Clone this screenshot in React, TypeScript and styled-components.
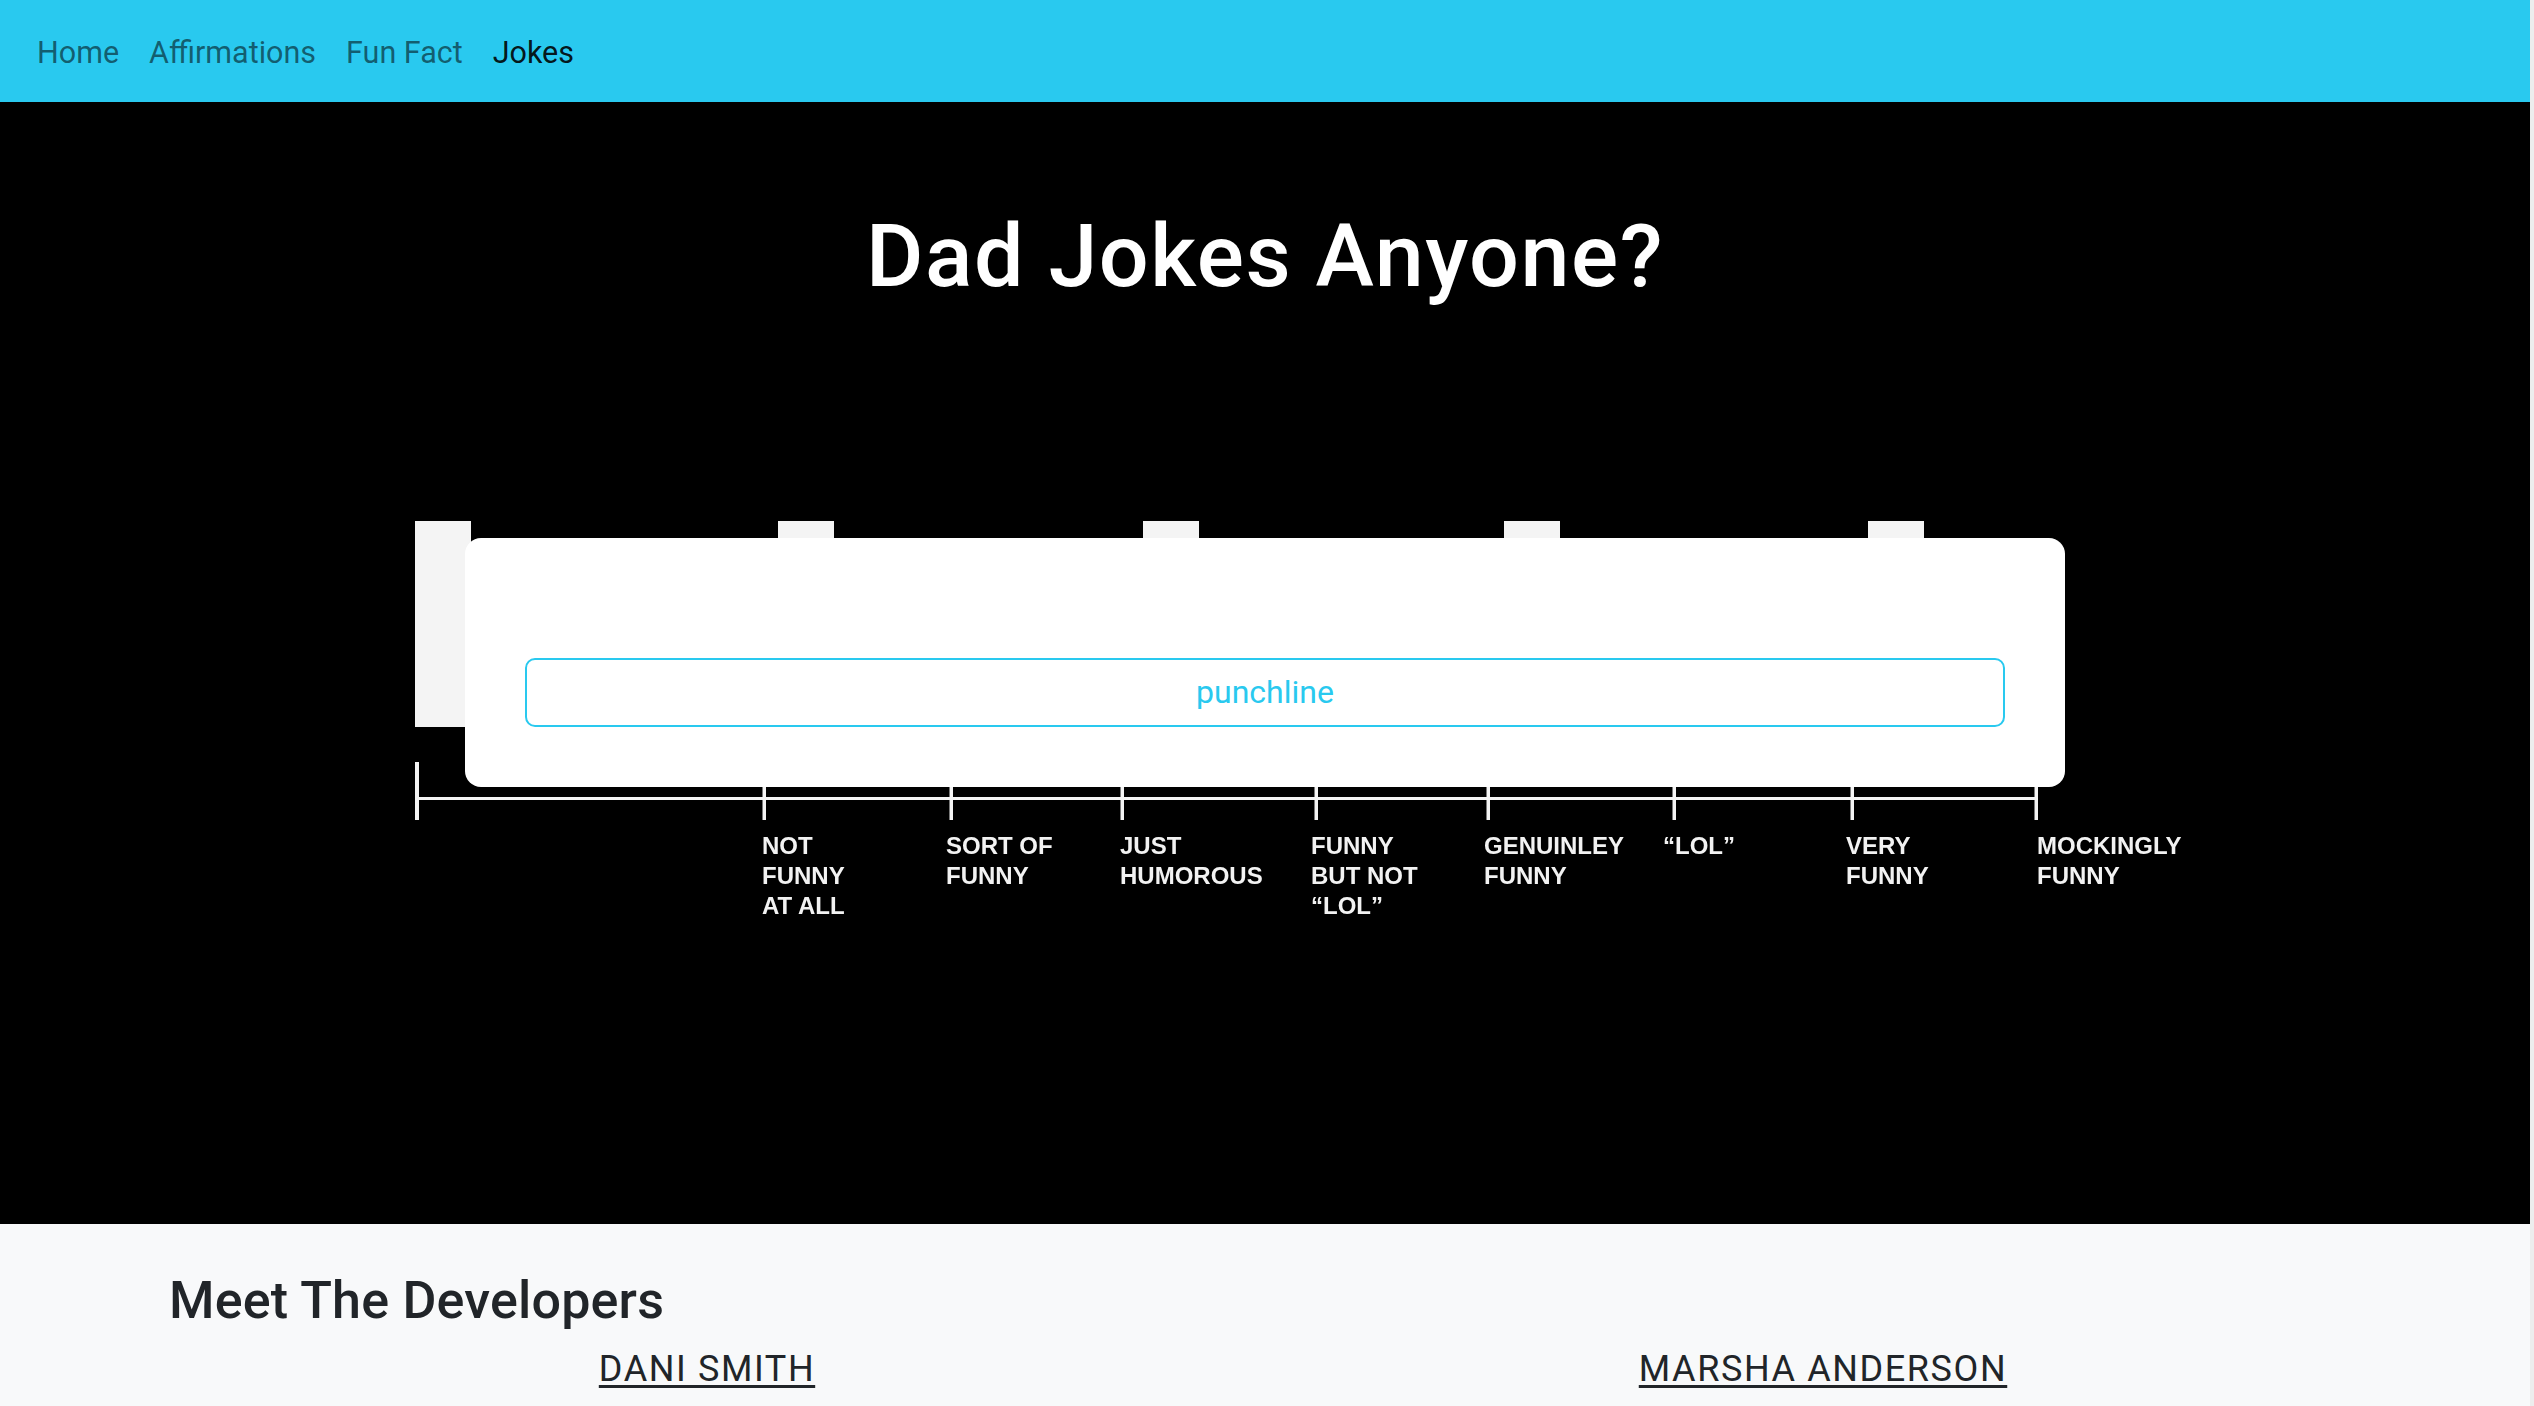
import React from "react";
import styled, { createGlobalStyle } from "styled-components";

const GlobalStyle = createGlobalStyle`
  html {
    background: #ededed;
    overflow: hidden;
  }
  body {
    margin: 0 4px 0 0;
    background: #f8f9fa;
    font-family: Roboto, "Liberation Sans", Arial, sans-serif;
    color: #212529;
  }
  * {
    box-sizing: border-box;
  }
`;

const CYAN = "#29c9ef";

const NavBar = styled.nav`
  display: flex;
  align-items: center;
  height: 102px;
  padding: 3px 22px 0;
  background: ${CYAN};
`;

const NavLink = styled.a<{ $active?: boolean }>`
  padding: 0 15px;
  font-size: 30.5px;
  line-height: 48px;
  text-decoration: none;
  color: ${(p) => (p.$active ? "rgba(0, 0, 0, 0.9)" : "rgba(0, 0, 0, 0.55)")};
  cursor: pointer;
`;

const Hero = styled.section`
  background: #000;
  padding: 101px 0 303px;
`;

const Title = styled.h1`
  margin: 0 0 212px;
  text-align: center;
  color: #fff;
  font-size: 88px;
  font-weight: 500;
  line-height: 1.2;
  letter-spacing: 1.5px;
`;

const Stage = styled.div`
  position: relative;
  width: 1700px;
  height: 400px;
  margin: 0 auto;
`;

const ScaleArt = styled.svg`
  display: block;
  overflow: visible;
  filter: blur(0.6px);
`;

const JokeCard = styled.div`
  position: absolute;
  left: 50px;
  top: 17px;
  width: 1600px;
  height: 249px;
  padding: 120px 60px 60px;
  background: #fff;
  border-radius: 16px;
`;

const PunchlineButton = styled.button`
  display: block;
  width: 100%;
  height: 69px;
  border: 2px solid ${CYAN};
  border-radius: 10px;
  background: #fff;
  color: ${CYAN};
  font-family: Roboto, "Liberation Sans", Arial, sans-serif;
  font-size: 32px;
  font-weight: 400;
  cursor: pointer;
`;

const DevSection = styled.section`
  background: #f8f9fa;
  padding: 46px 149px 40px;
`;

const DevHeading = styled.h2`
  margin: 0 0 16px;
  padding-left: 20px;
  font-size: 52px;
  font-weight: 500;
  line-height: 1.2;
  letter-spacing: 0.2px;
  color: #212529;
`;

const DevGrid = styled.div`
  display: grid;
  grid-template-columns: 1fr 1fr;
`;

const DevName = styled.a`
  justify-self: center;
  font-size: 36px;
  line-height: 1.2;
  letter-spacing: 1.6px;
  color: #212529;
  text-decoration: underline;
  text-decoration-thickness: 3px;
  text-underline-offset: 4px;
`;

const blocks = [363, 728, 1089, 1453];
const ticks = [349, 536, 707, 901, 1073, 1259, 1437, 1621];
const labels: { x: number; lines: string[] }[] = [
  { x: 347, lines: ["NOT", "FUNNY", "AT ALL"] },
  { x: 531, lines: ["SORT OF", "FUNNY"] },
  { x: 705, lines: ["JUST", "HUMOROUS"] },
  { x: 896, lines: ["FUNNY", "BUT NOT", "“LOL”"] },
  { x: 1069, lines: ["GENUINLEY", "FUNNY"] },
  { x: 1248, lines: ["“LOL”"] },
  { x: 1431, lines: ["VERY", "FUNNY"] },
  { x: 1622, lines: ["MOCKINGLY", "FUNNY"] },
];

function FunnyScale() {
  return (
    <ScaleArt width={1700} height={400} viewBox="0 0 1700 400">
      <g fill="#f4f4f4">
        <rect x={0} y={0} width={56} height={206} />
        {blocks.map((x) => (
          <rect key={x} x={x} y={0} width={56} height={60} />
        ))}
        <rect x={0} y={241} width={4} height={58} />
        <rect x={0} y={276} width={1623} height={3} />
        {ticks.map((x) => (
          <rect key={x} x={x - 1.5} y={250} width={3.5} height={49} />
        ))}
      </g>
      <g
        fill="#f2f2f2"
        fontFamily="'Liberation Sans', Arial, sans-serif"
        fontWeight={700}
        fontSize={24}
      >
        {labels.map((l) => (
          <text key={l.x} x={l.x}>
            {l.lines.map((line, i) => (
              <tspan key={i} x={l.x} y={333 + i * 30}>
                {line}
              </tspan>
            ))}
          </text>
        ))}
      </g>
    </ScaleArt>
  );
}

export default function App() {
  return (
    <>
      <GlobalStyle />
      <NavBar>
        <NavLink>Home</NavLink>
        <NavLink>Affirmations</NavLink>
        <NavLink>Fun Fact</NavLink>
        <NavLink $active>Jokes</NavLink>
      </NavBar>
      <Hero>
        <Title>Dad Jokes Anyone?</Title>
        <Stage>
          <FunnyScale />
          <JokeCard>
            <PunchlineButton>punchline</PunchlineButton>
          </JokeCard>
        </Stage>
      </Hero>
      <DevSection>
        <DevHeading>Meet The Developers</DevHeading>
        <DevGrid>
          <DevName>DANI SMITH</DevName>
          <DevName>MARSHA ANDERSON</DevName>
        </DevGrid>
      </DevSection>
    </>
  );
}
